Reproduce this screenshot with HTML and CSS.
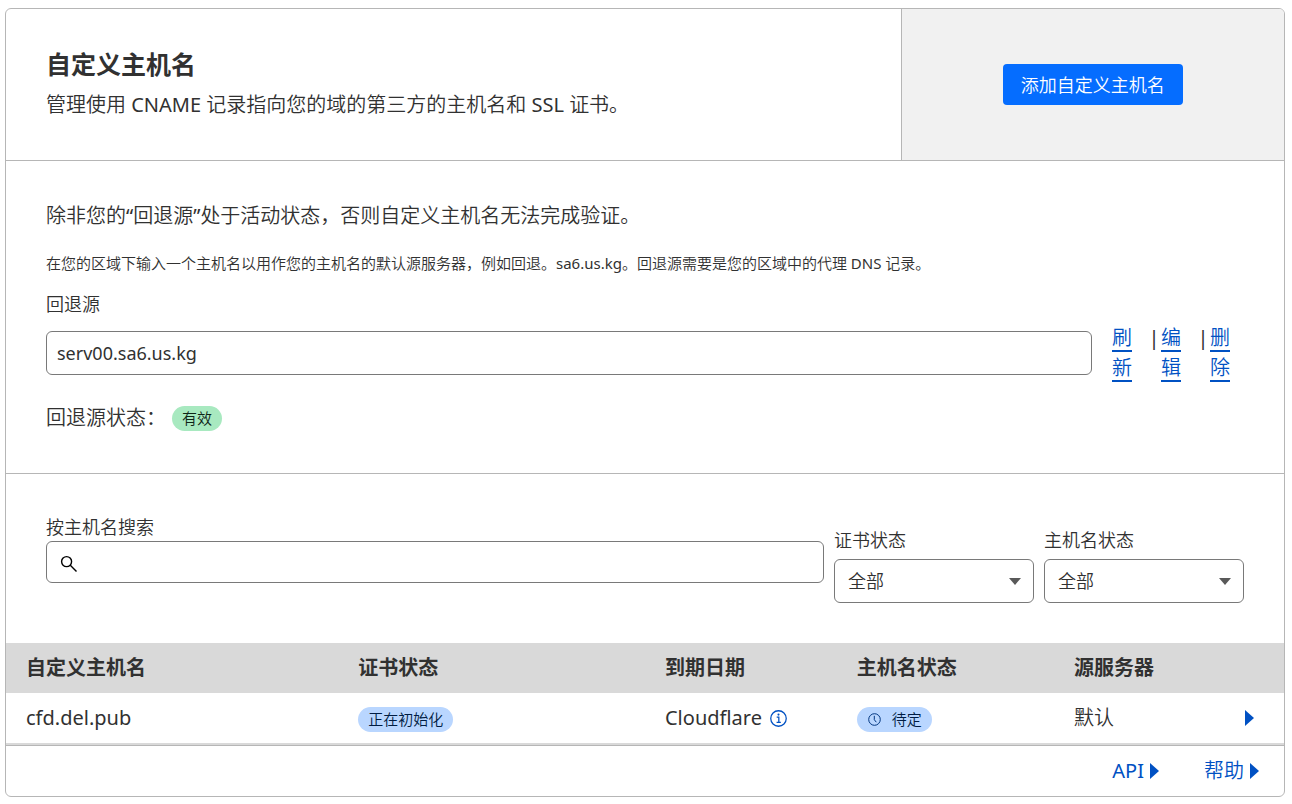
FILE: index.html
```html
<!DOCTYPE html>
<html lang="zh-CN">
<head>
<meta charset="utf-8">
<meta name="viewport" content="width=device-width, initial-scale=1">
<title>自定义主机名</title>
<link rel="stylesheet" href="styles.css">
</head>
<body>
<main class="card">
  <header class="card-header">
    <div class="card-intro">
      <h1 class="card-title">自定义主机名</h1>
      <p class="card-text">管理使用<span class="latin"> CNAME </span>记录指向您的域的第三方的主机名和<span class="latin"> SSL </span>证书。</p>
    </div>
    <div class="card-action">
      <button class="button" type="button">添加自定义主机名</button>
    </div>
  </header>

  <section class="section fallback">
    <p class="card-text">除非您的<span class="latin">“</span>回退源<span class="latin">”</span>处于活动状态，否则自定义主机名无法完成验证。</p>
    <p class="hint">在您的区域下输入一个主机名以用作您的主机名的默认源服务器，例如回退。<span class="latin">sa6.us.kg</span>。回退源需要是您的区域中的代理<span class="latin"> DNS </span>记录。</p>
    <label class="label" for="origin">回退源</label>
    <div class="origin-row">
      <input class="input origin-input latin" id="origin" type="text" value="serv00.sa6.us.kg">
      <div class="origin-links">
        <a class="origin-link" href="#">刷新</a>
        <span class="divider latin">|</span>
        <a class="origin-link" href="#">编辑</a>
        <span class="divider latin">|</span>
        <a class="origin-link" href="#">删除</a>
      </div>
    </div>
    <div class="status-row">
      <span>回退源状态：</span>
      <span class="badge badge-green">有效</span>
    </div>
  </section>

  <section class="section filters">
    <div class="search">
      <label class="label" for="search">按主机名搜索</label>
      <div class="search-box">
        <svg class="search-icon" viewBox="0 0 18 18" aria-hidden="true"><circle cx="6.600" cy="6.600" r="5" /><path d="M10.300 10.300 16.500 16.500" /></svg>
        <input class="input search-input" id="search" type="text">
      </div>
    </div>
    <div class="filter">
      <label class="label" for="cert">证书状态</label>
      <div class="select-box"><select class="input select" id="cert"><option>全部</option></select></div>
    </div>
    <div class="filter">
      <label class="label" for="host">主机名状态</label>
      <div class="select-box"><select class="input select" id="host"><option>全部</option></select></div>
    </div>
  </section>

  <table class="table">
    <colgroup>
      <col class="col-name"><col class="col-cert"><col class="col-expiry"><col class="col-status"><col class="col-origin"><col class="col-toggle">
    </colgroup>
    <thead>
      <tr><th>自定义主机名</th><th>证书状态</th><th>到期日期</th><th>主机名状态</th><th>源服务器</th><th></th></tr>
    </thead>
    <tbody>
      <tr>
        <td class="latin">cfd.del.pub</td>
        <td><span class="badge badge-blue">正在初始化</span></td>
        <td class="latin"><span class="issuer">Cloudflare
          <svg class="info-icon" viewBox="0 0 16 16" aria-hidden="true"><circle cx="8" cy="8" r="7.300" /><path d="M6.300 6.800h2v4.700M6.200 11.700h4" /><circle class="dot" cx="8" cy="4.300" r="1" /></svg></span></td>
        <td><span class="badge badge-blue"><svg class="clock-icon" viewBox="0 0 13 13" aria-hidden="true"><circle cx="6.500" cy="6.500" r="5.800" /><path d="M6.300 2.800v3.900l2 2.500" /></svg>待定</span></td>
        <td>默认</td>
        <td class="toggle-cell"><button class="toggle" type="button" aria-label="展开"><span class="caret"></span></button></td>
      </tr>
    </tbody>
  </table>

  <footer class="card-footer">
    <a class="footer-link latin" href="#">API<span class="caret"></span></a>
    <a class="footer-link" href="#">帮助<span class="caret"></span></a>
  </footer>
</main>
</body>
</html>
```
FILE: styles.css
```css
* { box-sizing: border-box; }

body {
  margin: 8px 7px 7px 5px;
  background: #fff;
  color: #313131;
  font: 350 20px/30px "Noto Sans", "Noto Sans CJK SC", sans-serif;
}

h1, p { margin: 0; }

a { color: #0051c3; }

button, input, select {
  font-family: inherit;
  font-weight: inherit;
}

.latin { font-weight: 400; }

.card {
  border: 1px solid #b6b6b6;
  border-radius: 6px;
  overflow: hidden;
}

.card-header {
  display: grid;
  grid-template-columns: 70% 30%;
  border-bottom: 1px solid #b6b6b6;
}

.card-intro { padding: 40px; }

.card-title {
  font-size: 25px;
  line-height: 30px;
  font-weight: 700;
  margin-bottom: 11px;
}

.card-action {
  display: flex;
  align-items: center;
  justify-content: center;
  border-left: 1px solid #b6b6b6;
  background: #f1f1f1;
}

.button {
  height: 41px;
  padding: 0 18px 2px;
  border: 0;
  border-radius: 4px;
  background: #056dff;
  color: #fff;
  font-size: 18px;
}

.section {
  padding: 40px;
}

.fallback { border-bottom: 1px solid #b6b6b6; }

.hint {
  margin: 20px 0 16px;
  font-size: 15px;
  line-height: 24px;
}

.label {
  display: block;
  font-size: 18px;
  line-height: 27px;
}

.input {
  display: block;
  width: 100%;
  height: 44px;
  border: 1px solid #797979;
  border-radius: 6px;
  background: #fff;
  color: #313131;
  font-size: 18px;
}

.origin-row {
  display: flex;
  align-items: center;
  gap: 20px;
  margin: 5px 0 20px;
}

.origin-input {
  flex: 1;
  min-width: 0;
  padding: 0 10px;
}

.origin-links {
  display: flex;
  margin-right: 14px;
}

.origin-link {
  width: 20px;
  text-decoration: underline;
  text-decoration-thickness: 2px;
  text-decoration-skip-ink: none;
  text-underline-offset: 5px;
}

.divider {
  width: 12px;
  margin: 0 1px 0 16px;
  text-align: center;
}

.status-row {
  display: flex;
  align-items: center;
  gap: 6px;
}

.badge {
  display: inline-flex;
  align-items: center;
  height: 25px;
  padding: 0 10px;
  border-radius: 13px;
  font-size: 15px;
  line-height: 25px;
}

.badge-green {
  background: #a8e9c0;
  color: #0f2417;
}

.badge-blue {
  background: #b9d6ff;
  color: #001c43;
}

.filters {
  display: flex;
  align-items: flex-end;
  gap: 10px;
}

.search {
  flex: 1;
  margin-bottom: 20px;
}

.search-box, .select-box { position: relative; }

.search-icon {
  position: absolute;
  top: 14px;
  left: 14px;
  width: 18px;
  height: 18px;
  fill: none;
  stroke: #000;
  stroke-width: 1.400;
}

.search-input {
  height: 42px;
  padding: 0 10px 0 42px;
}

.filter { width: 200px; }

.select-box { margin-top: 5px; }

.select-box::after {
  content: "";
  position: absolute;
  top: 19px;
  right: 13px;
  border: 6px solid transparent;
  border-top: 7px solid #595959;
  border-bottom: 0;
  pointer-events: none;
}

.select {
  appearance: none;
  padding: 0 13px;
}

.table {
  width: 100%;
  table-layout: fixed;
  border-collapse: separate;
  border-spacing: 0;
  border-bottom: 2px solid #d9d9d9;
}

.col-name { width: 26%; }
.col-cert { width: 24%; }
.col-expiry { width: 15%; }
.col-status { width: 17%; }
.col-origin { width: 12%; }
.col-toggle { width: 6%; }

th, td {
  height: 50px;
  padding: 0 0 0 20px;
  text-align: left;
  vertical-align: middle;
}

th {
  background: #d9d9d9;
  font-weight: 700;
}

td .badge { vertical-align: middle; }

.issuer {
  display: flex;
  align-items: center;
  gap: 8px;
}

.info-icon {
  width: 17px;
  height: 17px;
  fill: none;
  stroke: #0051c3;
  stroke-width: 1.200;
}

.info-icon .dot {
  fill: #0051c3;
  stroke: none;
}

.clock-icon {
  width: 13px;
  height: 13px;
  margin: 0 11px 0 1px;
  fill: none;
  stroke: #003681;
  stroke-width: 1;
}

td.toggle-cell {
  padding: 0 30px 0 0;
}

.toggle {
  display: flex;
  margin-left: auto;
  padding: 0;
  border: 0;
  background: none;
}

.caret {
  border: 8px solid transparent;
  border-left: 9px solid #0051c3;
  border-right: 0;
}

.card-footer {
  display: flex;
  justify-content: flex-end;
  gap: 45px;
  padding: 10px 25px;
  border-top: 1px solid #b6b6b6;
}

.footer-link {
  display: flex;
  align-items: center;
  gap: 6px;
  text-decoration: none;
}
```
